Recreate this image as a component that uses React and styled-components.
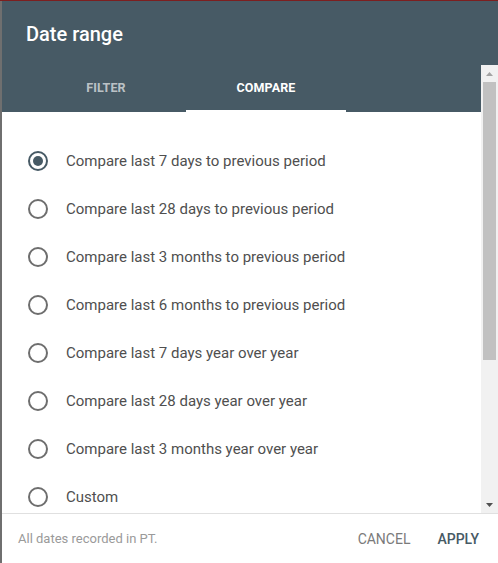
import React, { useState } from 'react'
import styled, { createGlobalStyle } from 'styled-components'

const GlobalStyle = createGlobalStyle`
  html, body { margin: 0; padding: 0; }
  body {
    background: #6f6f6f;
    font-family: Roboto, "Noto Sans", Arial, sans-serif;
    -webkit-font-smoothing: antialiased;
  }
`

const Page = styled.div`
  border-top: 1px solid #7c1f1f;
  padding-left: 2px;
  height: 562px;
`

const Dialog = styled.div`
  height: 562px;
  background: #fff;
  display: flex;
  flex-direction: column;
  overflow: hidden;
`

const TitleBar = styled.div`
  background: #475a65;
  height: 64px;
  display: flex;
  align-items: center;
  padding-left: 24px;
  flex-shrink: 0;
`

const Title = styled.h1`
  margin: 0;
  color: #fff;
  font-size: 20px;
  font-weight: 500;
  padding-top: 2px;
`

const Body = styled.div`
  flex: 1;
  display: flex;
  min-height: 0;
`

const Main = styled.div`
  flex: 1;
  display: flex;
  flex-direction: column;
  overflow: hidden;
`

const Tabs = styled.div`
  background: #475a65;
  height: 47px;
  display: flex;
  padding-left: 24px;
  flex-shrink: 0;
`

const Tab = styled.div`
  width: 160px;
  display: flex;
  align-items: center;
  justify-content: center;
  font-size: 12.5px;
  font-weight: 700;
  letter-spacing: 0.1px;
  color: ${p => (p.active ? '#fff' : 'rgba(255,255,255,0.65)')};
  box-shadow: ${p => (p.active ? 'inset 0 -2px 0 #fff' : 'none')};
  padding-bottom: 2px;
`

const List = styled.div`
  padding-top: 25px;
`

const Option = styled.label`
  display: flex;
  align-items: center;
  height: 48px;
  padding-left: 26px;
  cursor: pointer;
`

const Radio = styled.span`
  width: 20px;
  height: 20px;
  box-sizing: border-box;
  border-radius: 50%;
  border: 2px solid ${p => (p.checked ? '#475a65' : '#6e6e6e')};
  display: flex;
  align-items: center;
  justify-content: center;
  margin-right: 18px;
  flex-shrink: 0;

  &::after {
    content: '';
    width: 10px;
    height: 10px;
    border-radius: 50%;
    background: #475a65;
    display: ${p => (p.checked ? 'block' : 'none')};
  }
`

const OptionText = styled.span`
  font-size: 15px;
  color: #4f4f4f;
`

const ScrollBar = styled.div`
  width: 17px;
  background: #f1f1f1;
  display: flex;
  flex-direction: column;
  align-items: center;
  flex-shrink: 0;
`

const Arrow = styled.div`
  height: 17px;
  width: 17px;
  display: flex;
  align-items: center;
  justify-content: center;
`

const Track = styled.div`
  flex: 1;
  width: 100%;
  display: flex;
  justify-content: center;
`

const Thumb = styled.div`
  width: 13px;
  height: 278px;
  background: #c1c1c1;
`

const Footer = styled.div`
  height: 49px;
  border-top: 1px solid #e0e0e0;
  display: flex;
  align-items: center;
  padding: 0 19px 0 16px;
  flex-shrink: 0;
`

const Note = styled.span`
  flex: 1;
  font-size: 13px;
  color: #9a9a9a;
`

const Action = styled.button`
  background: none;
  border: none;
  font-family: inherit;
  font-size: 14px;
  font-weight: ${p => (p.primary ? 500 : 400)};
  color: ${p => (p.primary ? '#475a65' : '#7a7a7a')};
  padding: 0;
  margin-left: ${p => (p.primary ? '27px' : '0')};
  cursor: pointer;
`

const options = [
  'Compare last 7 days to previous period',
  'Compare last 28 days to previous period',
  'Compare last 3 months to previous period',
  'Compare last 6 months to previous period',
  'Compare last 7 days year over year',
  'Compare last 28 days year over year',
  'Compare last 3 months year over year',
  'Custom',
]

export default function App() {
  const [selected, setSelected] = useState(0)

  return (
    <Page>
      <GlobalStyle />
      <Dialog>
        <TitleBar>
          <Title>Date range</Title>
        </TitleBar>
        <Body>
          <Main>
            <Tabs>
              <Tab>FILTER</Tab>
              <Tab active>COMPARE</Tab>
            </Tabs>
            <List>
              {options.map((o, i) => (
                <Option key={o} onClick={() => setSelected(i)}>
                  <Radio checked={selected === i} />
                  <OptionText>{o}</OptionText>
                </Option>
              ))}
            </List>
          </Main>
          <ScrollBar>
            <Arrow>
              <svg width="7" height="4" viewBox="0 0 7 4"><path d="M3.5 0 L7 4 L0 4 Z" fill="#a3a3a3" /></svg>
            </Arrow>
            <Track>
              <Thumb />
            </Track>
            <Arrow>
              <svg width="7" height="4" viewBox="0 0 7 4"><path d="M0 0 L7 0 L3.5 4 Z" fill="#505050" /></svg>
            </Arrow>
          </ScrollBar>
        </Body>
        <Footer>
          <Note>All dates recorded in PT.</Note>
          <Action>CANCEL</Action>
          <Action primary>APPLY</Action>
        </Footer>
      </Dialog>
    </Page>
  )
}
